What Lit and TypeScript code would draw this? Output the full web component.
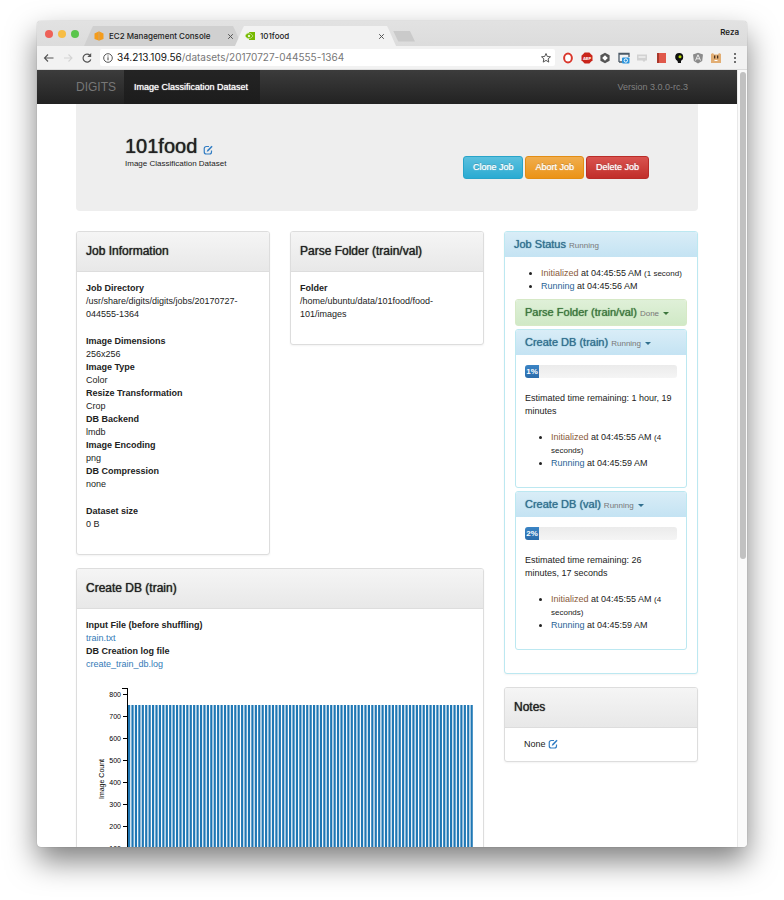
import { LitElement, html, css, svg } from "lit";
import { customElement, property } from "lit/decorators.js";

const editIcon = html`<svg class="edit" viewBox="0 0 20 20" aria-hidden="true">
  <path d="M12 3H6.500A4 4 0 0 0 2.500 7v7a4 4 0 0 0 4 4H13a4 4 0 0 0 4-4v-3" fill="none" stroke="currentColor" stroke-width="2.400" />
  <path d="M7.500 13.500l1-3.500 8.500-8.500 2.200 2.200L10.800 12.500z" fill="currentColor" />
</svg>`;

@customElement("ds-chart")
class DsChart extends LitElement {
  static styles = css`
    :host { display: block; }
    .chart { display: block; width: 100%; height: 220px; overflow: visible; font: 7px "Liberation Sans", Arial, sans-serif; }
    .axis { fill: none; stroke: #000; stroke-width: 1; shape-rendering: crispEdges; }
    .bar { fill: #1f77b4; }
    .label { fill: #000; }
  `;
  @property({ type: Number }) categories = 101;
  @property({ type: Number }) count = 750;

  render() {
    const zero = 188;
    const y = (v: number) => zero - v * 0.22;
    const pitch = 346 / this.categories;
    const ticks = [100, 200, 300, 400, 500, 600, 700, 800];
    return html`<svg class="chart" role="img" aria-label="Image Count by category">
      ${Array.from({ length: this.categories }, (_, i) => svg`<rect class="bar" x=${(41 + i * pitch).toFixed(2)} y=${y(this.count)} width="2.2" height=${this.count * 0.22} />`)}
      <path class="axis" d="M35 6.500H40.500V188.500H35" />
      ${ticks.map((t) => svg`<path class="axis" d=${`M36 ${Math.round(y(t))}.5H40`} /><text class="label" text-anchor="end" x="34" y=${Math.round(y(t)) + 3}>${t}</text>`)}
      <text class="label" text-anchor="middle" transform="translate(17 97) rotate(-90)">Image Count</text>
    </svg>`;
  }
}

@customElement("ds-task")
class DsTask extends LitElement {
  static styles = css`
    :host { display: block; }
    .task { border: 1px solid #bce8f1; border-radius: 3px; }
    .done { border-color: #d6e9c6; }
    .head { margin: 0; padding: 0 9px; height: 25px; line-height: 25px; font-size: 11px; font-weight: 500; text-shadow: 0 0 1px currentColor; color: #31708f; background: linear-gradient(#d9edf7, #c4e3f3); border-radius: 2px 2px 0 0; }
    .done .head { color: #3c763d; background: linear-gradient(#dff0d8, #d0e9c6); }
    .toggle { all: unset; cursor: pointer; font-size: 8px; color: #777; text-shadow: none; }
    .caret { display: inline-block; margin-left: 2px; vertical-align: 1px; border: 3px solid transparent; border-top-color: #31708f; border-bottom: 0; }
    .done .caret { border-top-color: #3c763d; }
    .body { padding: 10px 9px 17px; }
    .progress { height: 13px; border-radius: 3px; background: linear-gradient(#ebebeb, #f5f5f5); margin-bottom: 14px; overflow: hidden; }
    .bar { min-width: 14px; height: 13px; line-height: 13px; font-size: 8px; font-weight: bold; text-align: center; color: #fff; background: linear-gradient(#3a84c5, #2b6cab); }
    .eta { margin: 0 0 13px; }
    .log { margin: 0; padding-left: 26px; }
    .small { font-size: 8px; }
    .init { color: #8a5a3b; }
    .run { color: #2a6496; }
  `;
  @property() name = "";
  @property() status = "";
  @property({ type: Number }) percent = 0;
  @property() eta = "";

  render() {
    const done = this.status === "Done";
    return html`<section class="task ${done ? "done" : ""}">
      <h4 class="head">${this.name} <button class="toggle">${this.status} <span class="caret"></span></button></h4>
      ${done ? "" : html`<div class="body">
        <div class="progress" role="progressbar" aria-label=${this.name} aria-valuenow=${this.percent}><div class="bar" style="width:${this.percent}%">${`${this.percent}%`}</div></div>
        <p class="eta">${`Estimated time remaining: ${this.eta}`}</p>
        <ul class="log">
          <li><span class="init">Initialized</span> at 04:45:55 AM <span class="small">(4 seconds)</span></li>
          <li><span class="run">Running</span> at 04:45:59 AM</li>
        </ul>
      </div>`}
    </section>`;
  }
}

@customElement("browser-bar")
class BrowserBar extends LitElement {
  static styles = css`
    :host { display: block; font-family: Inter, sans-serif; font-size: 8px; color: #222; }
    .strip { display: flex; height: 25px; align-items: flex-end; background: linear-gradient(#e2e2e2, #dcdcdc); }
    .lights { display: flex; gap: 5px; padding: 0 5px 8px 8px; }
    .light { width: 8px; height: 8px; border-radius: 50%; background: #ee6158; }
    .light.min { background: #f7bd45; }
    .light.max { background: #5ac54c; }
    .tabs { display: flex; flex: 1; }
    .tab { display: flex; align-items: center; gap: 5px; width: 158px; height: 20px; box-sizing: border-box; padding: 0 8px 0 10px; background: #d0d0d0; clip-path: polygon(0 100%, 7px 4px, 9px 0, calc(100% - 9px) 0, calc(100% - 7px) 4px, 100% 100%); }
    .tab.active { width: 161px; margin-left: -7px; padding-right: 11px; background: #f2f2f2; }
    .fav { width: 10px; height: 10px; flex: none; }
    .title { flex: 1; white-space: nowrap; font-weight: 500; }
    .icon { all: unset; display: grid; place-items: center; cursor: pointer; }
    .icon svg { display: block; width: 12px; height: 12px; }
    .icon.x svg { width: 7px; height: 7px; }
    .new { all: unset; align-self: center; width: 22px; height: 11px; margin-left: -3px; background: #cacaca; clip-path: polygon(0 0, 76% 0, 100% 100%, 24% 100%); }
    .user { padding: 0 8px 7px 0; font-weight: 600; }
    .tools { display: flex; align-items: center; height: 24px; box-sizing: border-box; padding: 0 6px; gap: 7px; background: #f2f2f2; border-bottom: 1px solid #ddd; color: #555; }
    .omni { display: flex; align-items: center; flex: 1; gap: 3px; height: 17px; padding: 0 3px 0 2px; background: #fff; border-radius: 2px; }
    .url { flex: 1; font-size: 10px; color: #777; white-space: nowrap; }
    .host { color: #111; }
    .exts { display: flex; align-items: center; justify-content: space-between; width: 179px; }
    .abp { font-size: 4px; font-weight: bold; fill: #fff; }
  `;

  render() {
    const close = html`<button class="icon x" aria-label="Close tab"><svg viewBox="0 0 7 7"><path d="M1.200 1.200l4.600 4.600M5.800 1.200L1.200 5.800" stroke="#555" fill="none" /></svg></button>`;
    const exts = [
      ["Opera", svg`<ellipse cx="6" cy="6" rx="5.500" ry="5.800" fill="#fff"/><ellipse cx="6" cy="6" rx="3.900" ry="4.500" fill="#fff" stroke="#d8372c" stroke-width="2"/>`],
      ["Ad blocker", svg`<path d="M3.700.5h4.600l3.200 3.200v4.600l-3.200 3.200H3.700L.5 8.300V3.700z" fill="#c9251b"/><text class="abp" x="6" y="7.500" text-anchor="middle">ABP</text>`],
      ["Shield", svg`<path d="M6 .8l4.600 2.500v5.400L6 11.200 1.400 8.700V3.300z" fill="#555"/><path d="M6 3.200L8.800 6 6 8.800 3.200 6z" fill="#fff"/>`],
      ["Screenshot", svg`<path d="M1 10V1.500h10V5M1 2h10M1 10h3" fill="none" stroke="#4b5966" stroke-width="1.300"/><rect x="4" y="5.500" width="7.500" height="6" rx="1" fill="#2a94dd"/><circle cx="7.800" cy="8.500" r="1.700" fill="#2a94dd" stroke="#fff"/>`],
      ["Cast", svg`<path d="M1 2.500h10v6H9.500L8 10 6.500 8.500H1z" fill="#d2d2d2"/><path d="M2.500 5h7" stroke="#fff"/>`],
      ["Reader", svg`<path d="M2 1h9v10H2z" fill="#e0584a"/><path d="M2 1h2v10H2z" fill="#a8382c"/>`],
      ["Pin", svg`<circle cx="6.200" cy="5" r="4" fill="#111"/><path d="M4 7h4v4H5z" fill="#111"/><circle cx="7" cy="4.800" r="1.500" fill="#b6d900"/>`],
      ["Angular", svg`<path d="M6 .7l5 1.700-.8 6.700L6 11.400 1.800 9.100 1 2.400z" fill="#8b8b8b"/><path d="M3.500 8.500L6 2.800l2.500 5.700M4.500 6.800h3" stroke="#eee" fill="none"/>`],
      ["Box", svg`<path d="M1 2l2-1 1 1.500h4L9 1l2 1v9H1z" fill="#e2ae74"/><path d="M4 3.500h1.300v3H4zM7 3.500h1.300v3H7z" fill="#463020"/><path d="M4.500 8.500h3" stroke="#fff"/>`],
      ["Menu", svg`<circle cx="6" cy="2" r="1" fill="#444"/><circle cx="6" cy="6" r="1" fill="#444"/><circle cx="6" cy="10" r="1" fill="#444"/>`],
    ] as const;
    return html`
      <div class="strip">
        <div class="lights"><span class="light"></span><span class="light min"></span><span class="light max"></span></div>
        <div class="tabs">
          <div class="tab">
            <svg class="fav" viewBox="0 0 10 10"><path d="M.5 2.500L4.600.5v9L.5 8zM5.400.5l4.100 2V8L5.400 9.500z" fill="#f49c1c"/><path d="M5 .5v9" stroke="#e0890f" stroke-width=".8"/></svg>
            <span class="title">EC2 Management Console</span>${close}
          </div>
          <div class="tab active">
            <svg class="fav" viewBox="0 0 10 10"><path d="M4 1h6v8H4z" fill="#76b900"/><path d="M0 5c2-4 5-4 8 0-3 4-6 3-8 0z" fill="#76b900" stroke="#d6efb0" stroke-width=".7"/><circle cx="4" cy="5" r="1.200" fill="#e8f6d0"/></svg>
            <span class="title">101food</span>${close}
          </div>
          <button class="new" aria-label="New tab"></button>
        </div>
        <span class="user">Reza</span>
      </div>
      <div class="tools">
        <button class="icon" aria-label="Back"><svg viewBox="0 0 12 12"><path d="M10.500 6h-9M5 2.500L1.500 6 5 9.500" fill="none" stroke="#555" stroke-width="1.100"/></svg></button>
        <button class="icon" aria-label="Forward"><svg viewBox="0 0 12 12"><path d="M2 6h8M6.500 2.500L10 6 6.500 9.500" fill="none" stroke="#d4d4d4" stroke-width="1.100"/></svg></button>
        <button class="icon" aria-label="Reload"><svg viewBox="0 0 12 12"><path d="M9.800 7.500A4 4 0 1 1 9 3.300" fill="none" stroke="#555" stroke-width="1.200"/><path d="M10.200 1v4H6.300z" fill="#555"/></svg></button>
        <div class="omni">
          <button class="icon" aria-label="Site information"><svg viewBox="0 0 12 12"><circle cx="6" cy="6" r="4.300" fill="none" stroke="#555"/><path d="M6 5.300v3M6 3.400v1.100" stroke="#555" stroke-width="1.100"/></svg></button>
          <span class="url"><span class="host">34.213.109.56</span>/datasets/20170727-044555-1364</span>
          <button class="icon" aria-label="Bookmark"><svg viewBox="0 0 12 12"><path d="M6 1.500l1.300 3 3.200.3-2.400 2.100.7 3.200L6 8.400l-2.800 1.700.7-3.200L1.500 4.800l3.200-.3z" fill="none" stroke="#555"/></svg></button>
        </div>
        <div class="exts">${exts.map(([name, art]) => html`<button class="icon" aria-label=${name}><svg viewBox="0 0 12 12">${art}</svg></button>`)}</div>
      </div>`;
  }
}

@customElement("app-root")
class AppRoot extends LitElement {
  static styles = css`
    :host { display: flex; height: 100vh; box-sizing: border-box; padding: 21px 37px 53px; background: #fff; overflow: hidden; font: 9px/13px "Liberation Sans", Arial, sans-serif; color: #222; }
    .window { display: flex; flex-direction: column; flex: 1; min-width: 0; border-radius: 4px; overflow: hidden; background: #fff; box-shadow: 0 14px 30px rgba(0, 0, 0, 0.5), 0 0 1px rgba(0, 0, 0, 0.4); }
    .view { display: flex; flex: 1; min-height: 0; }
    .page { flex: 1; min-width: 0; overflow: hidden; }
    .track { width: 10px; box-sizing: border-box; padding: 2px; border-left: 1px solid #e8e8e8; background: #fafafa; }
    .thumb { height: 63%; width: 6px; border-radius: 3px; background: #c1c1c1; }
    .nav { display: flex; align-items: center; height: 34px; padding: 0 49px 0 39px; background: linear-gradient(#3c3c3c, #222); line-height: 34px; }
    .brand { color: #777; font-size: 12px; text-decoration: none; width: 48px; }
    .current { padding: 0 12px 0 10px; color: #fff; text-decoration: none; background: linear-gradient(#242424, #1c1c1c); text-shadow: 0 0 1px currentColor; }
    .version { margin-left: auto; color: #808080; }
    .container { padding: 0 39px; }
    .hero { display: flex; justify-content: space-between; align-items: center; height: 107px; box-sizing: border-box; padding: 0 49px; background: #eee; border-radius: 0 0 4px 4px; margin-bottom: 20px; }
    .name { margin: 0; font-size: 20px; line-height: 22px; font-weight: 500; text-shadow: 0 0 1px currentColor; }
    .kind { margin: 0 0 10px; font-size: 8px; }
    .edit { width: 10px; height: 10px; color: #337ec4; vertical-align: -2px; }
    .actions { display: flex; gap: 2px; padding-top: 20px; }
    .btn { height: 23px; padding: 0 9px; font: inherit; color: #fff; border: 1px solid #28a4c9; border-radius: 3px; background: linear-gradient(#5bc0de, #2aabd2); text-shadow: 0 -1px 0 rgba(0, 0, 0, 0.2), 0 0 1px #fff; }
    .btn.abort { border-color: #e38d13; background: linear-gradient(#f0ad4e, #eb9316); }
    .btn.delete { border-color: #b92c28; background: linear-gradient(#d9534f, #c12e2a); }
    .cols { display: grid; grid-template-columns: repeat(3, minmax(0, 1fr)); gap: 20px; align-items: start; }
    .main { grid-column: span 2; display: grid; grid-template-columns: repeat(2, minmax(0, 1fr)); gap: 13px 20px; align-items: start; }
    .side { display: grid; gap: 13px; }
    .wide { grid-column: span 2; }
    .panel { border: 1px solid #ddd; border-radius: 3px; background: #fff; box-shadow: 0 1px 2px rgba(0, 0, 0, 0.05); }
    .head { margin: 0; height: 40px; line-height: 39px; padding: 0 9px; font-size: 12px; font-weight: 500; text-shadow: 0 0 1px currentColor; background: linear-gradient(#f5f5f5, #e8e8e8); border-bottom: 1px solid #ddd; border-radius: 2px 2px 0 0; box-sizing: border-box; }
    .body { padding: 10px 9px 23px; }
    .facts { margin: 0; }
    .facts + .facts { margin-top: 14px; }
    .facts dt { font-weight: bold; }
    .facts dd { margin: 0; }
    .link { color: #337ab7; text-decoration: none; }
    .chart { margin: 11px 0 0 1px; }
    .status { border-color: #bce8f1; }
    .status .head { height: 25px; line-height: 25px; font-size: 11px; color: #31708f; background: linear-gradient(#d9edf7, #c4e3f3); border: 0; }
    .state { font-size: 8px; color: #777; text-shadow: none; }
    .status .body { padding: 10px 10px 23px; }
    .log { margin: 0 0 6px; padding-left: 26px; }
    .small { font-size: 8px; }
    .init { color: #8a5a3b; }
    .run { color: #2a6496; }
    .tasks { display: grid; gap: 3px; }
    .note { padding: 10px 19px; margin: 0; }
  `;

  private facts(rows: string[][]) {
    return html`<dl class="facts">${rows.map(([k, v]) => html`<dt>${k}</dt><dd>${v}</dd>`)}</dl>`;
  }

  render() {
    return html`<div class="window">
      <browser-bar></browser-bar>
      <div class="view">
        <div class="page">
          <nav class="nav">
            <a class="brand" href="#">DIGITS</a>
            <a class="current" href="#">Image Classification Dataset</a>
            <span class="version">Version 3.0.0-rc.3</span>
          </nav>
          <div class="container">
            <header class="hero">
              <div>
                <h1 class="name">101food ${editIcon}</h1>
                <p class="kind">Image Classification Dataset</p>
              </div>
              <div class="actions">
                <button class="btn">Clone Job</button>
                <button class="btn abort">Abort Job</button>
                <button class="btn delete">Delete Job</button>
              </div>
            </header>
            <div class="cols">
              <main class="main">
                <section class="panel">
                  <h2 class="head">Job Information</h2>
                  <div class="body">
                    ${this.facts([["Job Directory", "/usr/share/digits/digits/jobs/20170727-044555-1364"]])}
                    ${this.facts([["Image Dimensions", "256x256"], ["Image Type", "Color"], ["Resize Transformation", "Crop"], ["DB Backend", "lmdb"], ["Image Encoding", "png"], ["DB Compression", "none"]])}
                    ${this.facts([["Dataset size", "0 B"]])}
                  </div>
                </section>
                <section class="panel">
                  <h2 class="head">Parse Folder (train/val)</h2>
                  <div class="body">${this.facts([["Folder", "/home/ubuntu/data/101food/food-101/images"]])}</div>
                </section>
                <section class="panel wide">
                  <h2 class="head">Create DB (train)</h2>
                  <div class="body">
                    <dl class="facts">
                      <dt>Input File (before shuffling)</dt>
                      <dd><a class="link" href="#">train.txt</a></dd>
                      <dt>DB Creation log file</dt>
                      <dd><a class="link" href="#">create_train_db.log</a></dd>
                    </dl>
                    <ds-chart class="chart"></ds-chart>
                  </div>
                </section>
              </main>
              <aside class="side">
                <section class="panel status">
                  <h2 class="head">Job Status <span class="state">Running</span></h2>
                  <div class="body">
                    <ul class="log">
                      <li><span class="init">Initialized</span> at 04:45:55 AM <span class="small">(1 second)</span></li>
                      <li><span class="run">Running</span> at 04:45:56 AM</li>
                    </ul>
                    <div class="tasks">
                      <ds-task name="Parse Folder (train/val)" status="Done"></ds-task>
                      <ds-task name="Create DB (train)" status="Running" percent="1" eta="1 hour, 19 minutes"></ds-task>
                      <ds-task name="Create DB (val)" status="Running" percent="2" eta="26 minutes, 17 seconds"></ds-task>
                    </div>
                  </div>
                </section>
                <section class="panel">
                  <h2 class="head">Notes</h2>
                  <p class="note">None ${editIcon}</p>
                </section>
              </aside>
            </div>
          </div>
        </div>
        <div class="track"><div class="thumb"></div></div>
      </div>
    </div>`;
  }
}
